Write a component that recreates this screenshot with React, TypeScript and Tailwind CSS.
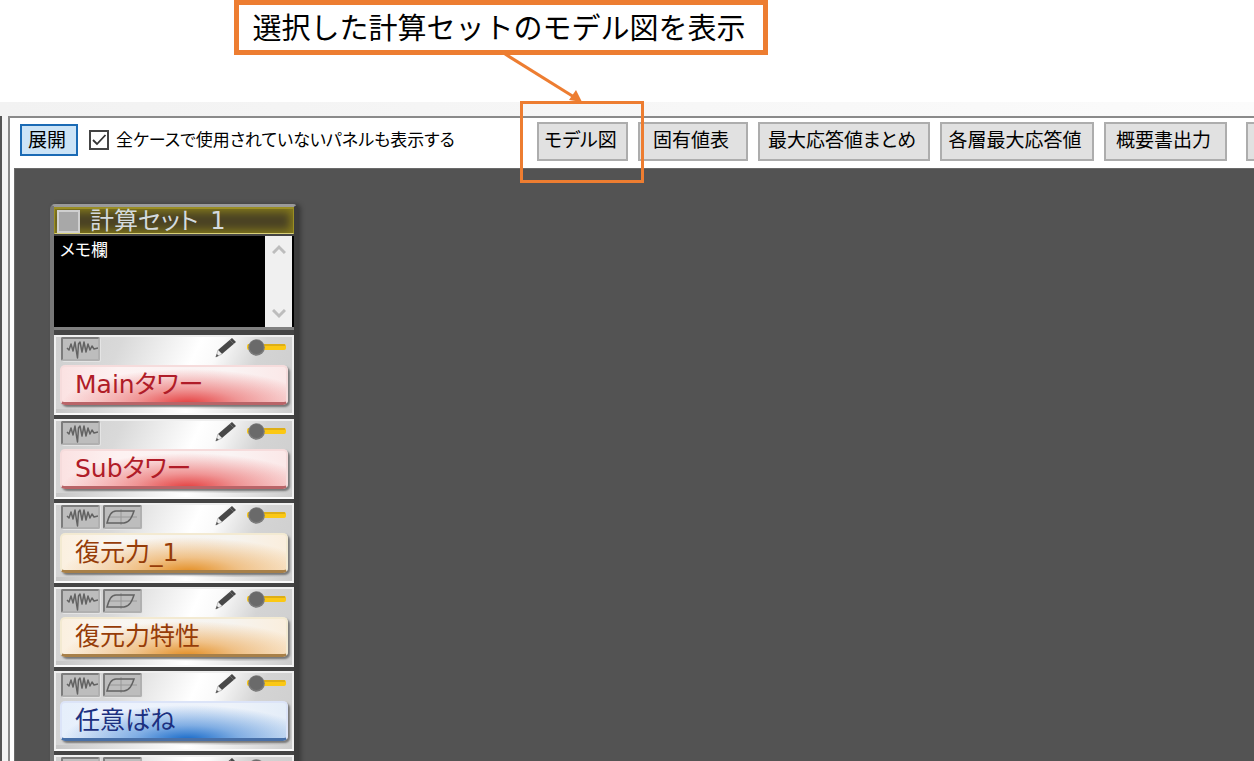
import React from "react";

type Tone = "red" | "orange" | "blue";

const tones: Record<Tone, string> = {
  red: "text-[#b01c28] border-[#f6dcdc] border-b-[#b96468] bg-[radial-gradient(ellipse_56%_100%_at_56%_106%,#e43c3c_0%,#e8585899_42%,#f0a0a000_100%),linear-gradient(90deg,#fbe2e2,#fdf2f2_25%,#faf4f4_75%,#fbe8e8)]",
  orange:
    "text-[#963c08] border-[#f3ead2] border-b-[#a88048] bg-[radial-gradient(ellipse_56%_100%_at_56%_106%,#e38d22_0%,#eba04499_42%,#f0c08000_100%),linear-gradient(90deg,#fbf0e0,#f9f6f2_25%,#f6f4f0_75%,#faeedd)]",
  blue: "text-[#1c3080] border-[#dce4f8] border-b-[#4870a8] bg-[radial-gradient(ellipse_56%_100%_at_56%_106%,#1468c8_0%,#3880d499_42%,#80b0f000_100%),linear-gradient(90deg,#e6effb,#ecf2fd_25%,#eef3fa_75%,#e4edf8)]",
};

const panels: { name: string; tone: Tone; hysteresis: boolean }[] = [
  { name: "Mainタワー", tone: "red", hysteresis: false },
  { name: "Subタワー", tone: "red", hysteresis: false },
  { name: "復元力_1", tone: "orange", hysteresis: true },
  { name: "復元力特性", tone: "orange", hysteresis: true },
  { name: "任意ばね", tone: "blue", hysteresis: true },
];

const iconTile =
  "h-6 w-[39px] rounded-[2px] border-2 border-t-[#7c7c7c] border-l-[#7c7c7c] border-r-[#b0b0b0] border-b-[#b0b0b0] bg-[#bdbdbd] shadow-[1px_1px_0_#e4e4e4]";

function WaveIcon() {
  return (
    <button aria-label="波形" className={iconTile}>
      <svg viewBox="0 0 35 20" className="h-full w-full" fill="none" stroke="#636363" strokeWidth="1.5" strokeLinejoin="round">
        <path d="M4 9L6 11L8 5L10 12L12 3L13.500 13L14.500 19L15.500 5L17 3L19 13L21 3L23 13L25 5L27 11L29 7L31 10L35 9" />
      </svg>
    </button>
  );
}

function LoopIcon() {
  return (
    <button aria-label="履歴" className={iconTile}>
      <svg viewBox="0 0 35 20" className="h-full w-full" fill="none" stroke="#626262" strokeWidth="1.5">
        <path d="M3 10H32M16 2V18" stroke="#989898" strokeWidth="1" />
        <path d="M2 16C4 9 6 4 11 4H29C27 10 25 15 19 16Z" />
      </svg>
    </button>
  );
}

function Tools({ hysteresis }: { hysteresis: boolean }) {
  return (
    <div className="flex h-7 items-start pl-[5px] pr-1.5">
      <div className="flex gap-[3px]">
        <WaveIcon />
        {hysteresis && <LoopIcon />}
      </div>
      <button aria-label="編集" className="ml-auto mr-2.5">
        <svg width="22" height="21" viewBox="0 0 22 21">
          <path d="M17 1L21 5L7 17L3 13Z" fill="#484848" />
          <path d="M15 3L19 7" stroke="#777" strokeWidth="0.8" />
          <path d="M3 13L7 17L1 20Z" fill="#eee" stroke="#999" strokeWidth="0.6" />
          <path d="M1.800 17L3.800 18.800L0.500 20.200Z" fill="#555" />
        </svg>
      </button>
      <button role="switch" aria-checked="false" aria-label="使用">
        <svg width="39" height="21" viewBox="0 0 39 21">
          <rect x="0" y="7" width="39" height="6" rx="2" fill="#fbc814" />
          <path d="M1 8H38" stroke="#c09418" />
          <circle cx="9.500" cy="10.500" r="8.300" fill="#7c7c7c" />
          <circle cx="9.500" cy="10" r="7" fill="#6a6a6a" />
        </svg>
      </button>
    </div>
  );
}

const cardClass =
  "border-2 border-[#efefef] border-b-[#fafafa] bg-[linear-gradient(115deg,#cfcfcf_0%,#d9d9d9_25%,#ffffff_54%,#fafafa_62%,#d4d4d4_78%,#cecece_100%)]";

function PanelCard({ name, tone, hysteresis }: { name: string; tone: Tone; hysteresis: boolean }) {
  return (
    <li className={`${cardClass} h-20`}>
      <Tools hysteresis={hysteresis} />
      <button
        className={`mx-1 flex h-10 w-[228px] items-center rounded-[5px] border-2 border-b-[3px] pl-[13px] text-left text-[25px] leading-[35px] shadow-[2px_2px_2px_#777] ${tones[tone]}`}
      >
        {name}
      </button>
      <div className="mt-1 h-1 bg-[linear-gradient(90deg,#c6c6c6,#ffffff_55%,#cccccc)]" />
    </li>
  );
}

function Chevron({ d }: { d: string }) {
  return (
    <svg width="14" height="10" viewBox="0 0 14 10" fill="none" stroke="#bdbdbd" strokeWidth="3">
      <path d={d} />
    </svg>
  );
}

const toolButton = "h-[39px] shrink-0 whitespace-nowrap border-2 border-[#adadad] bg-[#e1e1e1] pb-1 pr-1 text-center text-[19px] leading-6";

export default function App() {
  return (
    <div className="flex h-screen flex-col overflow-hidden bg-white text-black font-['DejaVu_Sans','Noto_Sans_CJK_JP',sans-serif] [font-feature-settings:'palt']">
      <header className="h-[102px] shrink-0">
        <div className="relative ml-[234px] w-[534px]">
          <p className="flex h-[55px] items-center justify-center border-5 border-[#ed7d31] bg-white pb-1 pr-1 text-[29px] leading-9 font-['Noto_Sans_CJK_JP',sans-serif] [font-feature-settings:normal]">
            選択した計算セットのモデル図を表示
          </p>
          <svg className="absolute left-[260px] top-[52px] z-10" width="100" height="52" viewBox="0 0 100 52">
            <path d="M11 2L80 45" stroke="#ed7d31" strokeWidth="3" />
            <path d="M88 50L75 48L82 38Z" fill="#ed7d31" />
          </svg>
        </div>
      </header>

      <div className="h-3.5 shrink-0 bg-linear-to-r from-[#f2f2f2] to-[#fbfbfb]" />

      <div className="flex min-h-0 grow">
        <div className="w-2 shrink-0 border-l-2 border-[#555] bg-[#f4f4f4]" />
        <main className="flex min-w-0 grow flex-col border-l-2 border-t-2 border-[#8a8a8a] pl-1">
          <div className="flex h-[50px] shrink-0 items-start pl-1.5 pt-1">
            <div className="flex w-[517px] shrink-0 items-center pt-0.5">
              <button className="h-8 w-[58px] border-2 border-[#1b6bb5] bg-[#cce4f7] pr-1 text-[19px] leading-6">展開</button>
              <label className="ml-[11px] flex items-center gap-[7px] whitespace-nowrap text-[17px] leading-6">
                <span className="relative flex h-5 w-5">
                  <input type="checkbox" defaultChecked className="peer h-5 w-5 appearance-none border-2 border-[#444] bg-white" />
                  <svg className="pointer-events-none absolute inset-0 hidden peer-checked:block" viewBox="0 0 20 20" fill="none" stroke="#333" strokeWidth="1.8">
                    <path d="M4 10L8 14L16.500 5" />
                  </svg>
                </span>
                全ケースで使用されていないパネルも表示する
              </label>
            </div>
            <div className="flex shrink-0 gap-2.5">
              <div className="relative">
                <button className={`${toolButton} w-[91px]`}>モデル図</button>
                <div className="pointer-events-none absolute -left-[17px] -top-[21px] h-[82px] w-[124px] border-3 border-[#ed7d31]" />
              </div>
              <button className={`${toolButton} w-[110px]`}>固有値表</button>
              <button className={`${toolButton} w-[172px]`}>最大応答値まとめ</button>
              <button className={`${toolButton} w-[154px]`}>各層最大応答値</button>
              <button className={`${toolButton} w-[123px]`}>概要書出力</button>
            </div>
            <button aria-label="その他" className={`${toolButton} ml-[19px] w-[60px]`} />
          </div>

          <div className="min-h-0 grow overflow-hidden border-l border-t border-[#6a6a6a] bg-[#535353] pl-[35px] pt-[35px]">
            <section className="w-[248px] rounded-t-[5px] border-t-3 border-r-4 border-l-4 border-t-[#9a9a9a] border-l-[#777] border-r-[#3c3c3c] bg-[#444] shadow-[3px_0_4px_#3a3a3a]">
              <div className="flex h-[27px] items-center border border-t-2 border-[#9a8e24] border-b-[#d8cf78] bg-[#4a4224] shadow-[inset_0_0_9px_3px_#857a1c]">
                <label className="flex items-center gap-2.5 text-[24px] leading-6 text-[#d4dade]">
                  <input type="checkbox" className="ml-0.5 h-[23px] w-[23px] appearance-none border-2 border-[#cfcfcf] bg-[#a8a8a8]" />
                  <span>計算セット&ensp;1</span>
                </label>
              </div>
              <div className="mt-0.5 flex h-[91px] bg-black">
                <textarea
                  aria-label="メモ"
                  defaultValue="メモ欄"
                  className="min-w-0 grow resize-none overflow-hidden bg-black px-1.5 pt-0.5 text-[17px] leading-6 text-white outline-none"
                />
                <div className="mr-0.5 flex w-[27px] flex-col items-center justify-between bg-[#f0f0f0] py-2">
                  <Chevron d="M1 9L7 3L13 9" />
                  <Chevron d="M1 1L7 7L13 1" />
                </div>
              </div>
              <div className="h-[3px] bg-[#808080]" />
              <ul className="mt-[5px] flex flex-col gap-1">
                {panels.map((p) => (
                  <PanelCard key={p.name} {...p} />
                ))}
                <li className={cardClass}>
                  <Tools hysteresis />
                </li>
              </ul>
            </section>
          </div>
        </main>
      </div>
    </div>
  );
}
